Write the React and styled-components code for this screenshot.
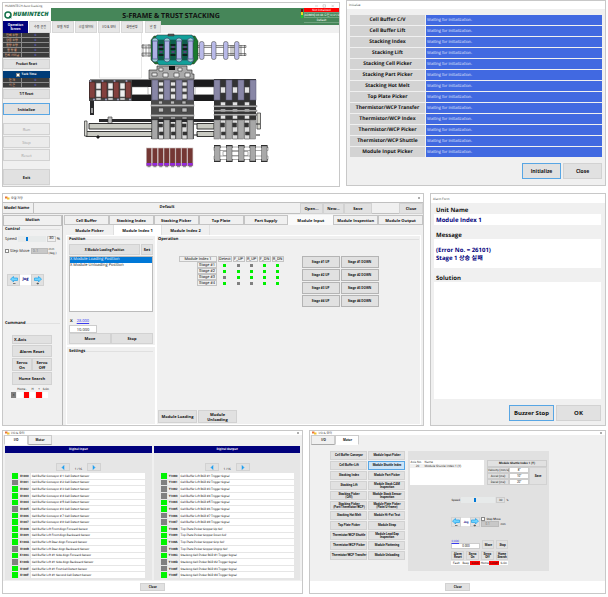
import React, { useState } from "react";
import styled, { createGlobalStyle } from 'styled-components'


const statRows = ["전체 수량", "양품 수량", "불량 수량", "불 량 률", "전체 사이클"];
const tackRows = ["현 재", "최 근"];
const mainTabs = ["수동 운전", "모델 저장", "스텝 데이터", "I/O & 모터", "화면설정"];

const initUnits = [
	"Cell Buffer C/V", "Cell Buffer Lift", "Stacking Index", "Stacking Lift", "Stacking Cell Picker",
	"Stacking Part Picker", "Stacking Hot Melt", "Top Plate Picker", "Thermistor/WCP Transfer",
	"Thermistor/WCP Index", "Thermistor/WCP Picker", "Thermistor/WCP Shuttle", "Module Input Picker",
];

const unitTabs = [
	"Cell Buffer", "Stacking Index", "Stacking Picker", "Top Plate", "Part Supply",
	"Module Input", "Module Inspection", "Module Output",
];

const sensors = ["Detect", "F_UP", "R_UP", "F_DN", "R_DN"];
const stages = [
	["Stage #1", [1, 0, 0, 1, 1]],
	["Stage #2", [1, 1, 1, 1, 1]],
	["Stage #3", [0, 1, 1, 1, 1]],
	["Stage #4", [1, 0, 0, 1, 1]],
];

const inputs = [
	["X1000", 1, "Cell Buffer Conveyor # 1 Cell Detect Sensor"],
	["X1001", 0, "Cell Buffer Conveyor # 2 Cell Detect Sensor"],
	["X1002", 1, "Cell Buffer Conveyor # 3 Cell Detect Sensor"],
	["X1003", 1, "Cell Buffer Conveyor # 4 Cell Detect Sensor"],
	["X1004", 1, "Cell Buffer Conveyor # 5 Cell Detect Sensor"],
	["X1005", 0, "Cell Buffer Conveyor # 6 Cell Detect Sensor"],
	["X1006", 1, "Cell Buffer Conveyor # 7 Cell Detect Sensor"],
	["X1007", 1, "Cell Buffer Conveyor # 8 Cell Detect Sensor"],
	["X1008", 1, "Cell Buffer Lift Front Align Forward Sensor"],
	["X1009", 1, "Cell Buffer Lift Front Align Backward Sensor"],
	["X100A", 1, "Cell Buffer Lift Rear Align Forward Sensor"],
	["X100B", 0, "Cell Buffer Lift Rear Align Backward Sensor"],
	["X100C", 1, "Cell Buffer Lift #1 Side Align Forward Sensor"],
	["X100D", 0, "Cell Buffer Lift #1 Side Align Backward Sensor"],
	["X100E", 1, "Cell Buffer Lift #1 First Cell Detect Sensor"],
	["X100F", 1, "Cell Buffer Lift #1 Second Cell Detect Sensor"],
];

const outputs = [
	["Y1080", 1, "Cell Buffer Lift BCR #1 Trigger Signal"],
	["Y1081", 0, "Cell Buffer Lift BCR #2 Trigger Signal"],
	["Y1082", 0, "Cell Buffer Lift BCR #3 Trigger Signal"],
	["Y1083", 0, "Cell Buffer Lift BCR #4 Trigger Signal"],
	["Y1084", 1, "Cell Buffer Lift BCR #5 Trigger Signal"],
	["Y1085", 1, "Cell Buffer Lift BCR #6 Trigger Signal"],
	["Y1086", 0, "Cell Buffer Lift BCR #7 Trigger Signal"],
	["Y1087", 0, "Cell Buffer Lift BCR #8 Trigger Signal"],
	["Y1088", 1, "Top Plate Picker Gripper Up Sol'"],
	["Y1089", 1, "Top Plate Picker Gripper Down Sol'"],
	["Y108A", 1, "Top Plate Picker Gripper Grip Sol'"],
	["Y108B", 0, "Top Plate Picker Gripper Ungrip Sol'"],
	["Y108C", 1, "Stacking Cell Picker BCR #1 Trigger Signal"],
	["Y108D", 0, "Stacking Cell Picker BCR #2 Trigger Signal"],
	["Y108E", 0, "Stacking Cell Picker BCR #3 Trigger Signal"],
	["Y108F", 1, "Stacking Cell Picker BCR #4 Trigger Signal"],
];

const motorUnits = [
	"Cell Buffer Conveyor", "Module Input Picker",
	"Cell Buffer Lift", "Module Shuttle Index",
	"Stacking Index", "Module Part Picker",
	"Stacking Lift", "Module Stack CAM\nInspection",
	"Stacking Picker\n(Cell)", "Module Stack Sensor\nInspection",
	"Stacking Picker\n(Part/Thermistor/WCP)", "Module Plate Picker\n(Plate/U-frame)",
	"Stacking Hot Melt", "Module Hi-Pot Test",
	"Top Plate Picker", "Module Strap",
	"Thermistor/WCP Shuttle", "Module Lead Gap\nInspection",
	"Thermistor/WCP Picker", "Module Flattening",
	"Thermistor/WCP Transfer", "Module Unloading",
];


export default function App() {
	return (
		<Page>
			<Global />
			<Row left={338} right={260} tall={187}>
				<MainScreen />
				<InitializeForm />
			</Row>
			<Row left={422} right={176} tall={233}>
				<ModelForm />
				<AlarmForm />
			</Row>
			<Row left={302} right={297} tall={164}>
				<IoForm />
				<MotorForm />
			</Row>
		</Page>
	);
}


function MainScreen() {
	return (
		<Win lower>
			<Title_bar h={5} size={3}>
				<span>HUMINTECH Auto Stacking</span>
				<Win_marks />
			</Title_bar>
			<Main_header>
				<Logo_box>
					<svg width="8" height="8" viewBox="0 0 16 16">
						<circle cx="8" cy="8" r="6" fill="none" stroke="#12714a" strokeWidth="3" />
						<path d="M11 9 L16 15 L9 13 Z" fill="#12714a" />
					</svg>
					<Logo_text>HUMINTECH</Logo_text>
				</Logo_box>
				<Main_title>S-FRAME &amp; TRUST STACKING</Main_title>
				<Tower>
					<i /><i /><i />
				</Tower>
				<Status>
					<Status_line red>Not Initialized</Status_line>
					<Status_line>[ADMIN] 08:44 오전 0/21/20</Status_line>
					<Status_line>Default</Status_line>
				</Status>
			</Main_header>
			<Main_tabs>
				<Main_tab on>Operation<br />Screen</Main_tab>
				{mainTabs.map((t) => <Main_tab key={t}>{t}</Main_tab>)}
				<Main_tab slim>알 람</Main_tab>
			</Main_tabs>
			<Main_body>
				<Side>
					<Count_table>
						<tbody>
							{statRows.map((t) => <tr key={t}><th>{t}</th><td>0</td></tr>)}
						</tbody>
					</Count_table>
					<Btn h={10} size={3}>Product Reset</Btn>
					<Tack_head>
						<input type="checkbox" id="tack" defaultChecked />
						<label htmlFor="tack">Tack Time</label>
					</Tack_head>
					<Count_table>
						<tbody>
							{tackRows.map((t) => <tr key={t}><th>{t}</th><td>0</td></tr>)}
						</tbody>
					</Count_table>
					<Btn h={10} size={3}>T/T Reset</Btn>
					<Side_group>
						<Btn h={12} size={4} focus>Initialize</Btn>
					</Side_group>
					<Side_group wide>
						<Btn h={12} size={4} disabled>Run</Btn>
						<Btn h={12} size={4} disabled>Stop</Btn>
						<Btn h={12} size={4} disabled>Reset</Btn>
					</Side_group>
					<Side_group wide>
						<Btn h={16} size={4}>Exit</Btn>
					</Side_group>
				</Side>
				<Machine />
			</Main_body>
		</Win>
	);
}

function Win_marks() {
	return (
		<svg width="24" height="4" viewBox="0 0 24 4" fill="none" stroke="#aaa" strokeWidth=".5">
			<path d="M2 2h3M10 .8h2.5v2.4H10zM18.500 .8l2.400 2.400M20.900 .8l-2.400 2.400" />
		</svg>
	);
}

// top view of the stacking line
function Machine() {
	const cells = [152, 164, 176, 187.5];
	const exits = [214, 226, 238, 250];
	return (
		<Machine_svg viewBox="51 33 288 153" preserveAspectRatio="xMinYMin meet" role="img" aria-label="Machine layout">
			<path d="M99.500 33V78H141.500V33" fill="none" stroke="#ddd" strokeWidth=".7" />

			{/* cell turret */}
			<g stroke="#333" strokeWidth=".5">
				<path d="M142 45h9v3h-9zM142 53h9v3h-9zM143 44v13M146 46v9M149 44v13" fill="#ddd" />
				<path d="M154 36H195L198 41V59L194 64H155L151 60V40Z" fill="#1a7a2e" />
				<path d="M157 35h35l3 5H154zM156 60h38l-3 5h-32z" fill="#12a09a" />
				<path d="M168 34h6v2h-6z" fill="#555" />
				<path d="M198 45.500h48v2h-48zM198 53.500h48v2h-48z" fill="#ddd" />
				<path d="M231 45v11M233 45v11M241 45v11M244.500 45v11" />
			</g>
			{[158.5, 170.5, 182.5].map((x) => (
				<g key={x}>
					<rect x={x} y="40" width="5" height="20" fill="#0f5d4e" />
					<path d={`M${x} 45h5M${x} 49h5M${x} 55h5`} stroke="#111" strokeWidth="1.5" />
					<path d={`M${x + 1} 47h3M${x + 1} 52h3`} stroke="#a030a0" strokeWidth="1" />
				</g>
			))}
			{[152.5, 164.5, 176.5, 188].map((x) => (
				<g key={x} stroke="#30406a" strokeWidth=".6">
					<circle cx={x + 2.5} cy="41" r="3" fill="#9fd0d8" />
					<circle cx={x + 2.5} cy="59" r="3" fill="#9fd0d8" />
					<rect x={x} y="41" width="5" height="18" fill="#aeb0e4" />
				</g>
			))}
			{[199.5, 211.5, 223.5, 234.5].map((x) => (
				<rect key={x} x={x} y="41.500" width="4.500" height="18" rx="2" fill="#b8b9e8" stroke="#555" strokeWidth=".6" />
			))}

			{/* pickers under the turret */}
			<path d="M157 66h30v4h5v4h2v5h-45v-9h8z" fill="#aaa" stroke="#222" strokeWidth=".6" />
			<path d="M159 68h4v3h-4zM178 68h4v3h-4zM152 73h5v3h-5zM163 73h5v4h-5zM174 73h5v4h-5zM185 73h5v4h-5z" fill="#eee" stroke="#333" strokeWidth=".6" />
			<path d="M169 66h6v4h-6z" fill="#111" />

			{/* main conveyor */}
			<path d="M90 79.500H256V87H90zM90 94.500H256V101H90z" fill="#1b1b1d" />
			<path d="M132 87h16v7.500h-16zM195 87h19v7.500h-19z" fill="#fff" stroke="#777" strokeWidth=".5" />
			<path d="M89 80h43v21H89z" fill="#454545" />
			{[96, 108, 120].map((x) => (
				<path key={x} d={`M${x} 83h5v6h-5zM${x} 90h5v7h-5zM${x} 98h5v2h-5z`} fill="#eee" stroke="#555" strokeWidth=".6" />
			))}
			{[89.5, 101.5, 113.5, 125.5].map((x) => (
				<g key={x}>
					<rect x={x} y="82" width="5.500" height="16" fill="#83403e" stroke="#35201f" strokeWidth=".6" />
					<circle cx={x + 1} cy="81" r="1.100" fill="#99b" />
					<circle cx={x + 4.5} cy="99.500" r="1.100" fill="#99b" />
				</g>
			))}
			<path d="M90 101h4v14h-4z" fill="#29292b" />
			<path d="M91 108h2v5h-2z" fill="#999" />

			<path d="M151 80h43v59h-43z" fill="#4c4c4c" />
			<path d="M214 79h42v41h-42z" fill="#333" />
			{[158.5, 170.5, 182].map((x) => (
				<g key={x} stroke="#333" strokeWidth=".6">
					<path d={`M${x} 82h5v4h-5zM${x} 88h5v4h-5zM${x} 94h5v5h-5z`} fill="#e4e4e4" />
					<path d={`M${x} 101h4v3h-4zM${x} 108h5v4h-5zM${x} 117h5v2h-5z`} fill="#bbb" />
					<path d={`M${x} 120h5v19h-5z`} fill="#ddd" />
					<path d={`M${x} 124h4v3h-4zM${x + 1} 132h4v3h-4z`} fill="#333" />
				</g>
			))}
			{[220.5, 232.5, 244.500].map((x) => (
				<g key={x} stroke="#444" strokeWidth=".6">
					<path d={`M${x} 87h5v6h-5zM${x} 102h5v4h-5zM${x} 109h5v3h-5zM${x} 114h5v5h-5z`} fill="#e5e5e5" />
					<path d={`M${x} 120h5v19h-5z`} fill="#ddd" />
					<path d={`M${x} 123h4v4h-4zM${x + 1} 132h4v3h-4z`} fill="#333" />
				</g>
			))}
			<path d="M151 104.500h43v2h-43zM151 114.500h43v2h-43zM214 105.500h43v1.500h-43zM214 110h43v1.500h-43zM214 114h43v1.500h-43z" fill="#bbb" stroke="#555" strokeWidth=".4" />
			{cells.concat(exits).map((x) => (
				<rect key={x} x={x} y="80" width="6" height="20" fill="#8886a6" stroke="#55536f" strokeWidth=".5" />
			))}

			{/* linear axes */}
			<path d="M99 119h120v3H99z" fill="#29292b" />
			<path d="M108 117h4v7h-4z" fill="#bbb" stroke="#333" strokeWidth=".6" />
			<path d="M89 123.500h63v5.500H89zM86 131.500h66v5H86zM197 123.500h17v5.500h-17zM197 131.500h17v5h-17z" fill="#c9cac2" stroke="#222" strokeWidth=".9" />
			<path d="M84.500 121h2.500v15h-2.500zM257 113h3.500v16h-3.500z" fill="#d5d5cd" stroke="#444" strokeWidth=".8" />
			<path d="M97 136h2v2h-2zM194 124h3M194 135h4M256 124h4M256 135h4" stroke="#222" />
			{cells.concat(exits).map((x) => (
				<rect key={x} x={x} y="120" width="5.500" height="19" fill="#a7a7a7" stroke="#666" strokeWidth=".5" />
			))}

			{/* magazines */}
			{[0, 1, 2, 3, 4, 5, 6, 7].map((n) => (
				<g key={n}>
					<rect x={146.3 + n * 5.9} y="148" width="5.300" height="18" fill="#743734" stroke="#c8bcbb" strokeWidth=".6" />
					<rect x={146.6 + n * 5.9} y="163" width="4.700" height="2.500" fill="#9228e0" />
					<rect x={147.5 + n * 5.9} y="166.200" width="3" height="1" fill="#777" />
				</g>
			))}
			<path d="M214 147h54v3.500h-54zM214 156h54v3.500h-54zM223 151.500h25v4h-25z" fill="#fff" stroke="#888" strokeWidth=".7" />
			{[214.5, 226.5, 238.5, 250, 261.5].map((x) => (
				<g key={x}>
					<path d={`M${x - 0.5} 145h6.500v3h-6.500zM${x - 0.5} 159h6.500v3h-6.500z`} fill="#222" />
					<rect x={x} y="146" width="5.500" height="15" fill="#a9a9a9" stroke="#555" strokeWidth=".5" />
				</g>
			))}
		</Machine_svg>
	);
}


function InitializeForm() {
	return (
		<Win short>
			<Title_bar h={8} size={3}><span>Initialize</span></Title_bar>
			<Init_body>
				<Init_table>
					<tbody>
						{initUnits.map((u) => (
							<tr key={u}><th>{u}</th><td>Waiting for initialization.</td></tr>
						))}
					</tbody>
				</Init_table>
				<Foot_btns>
					<Btn h={16} w={39} size={5} focus>Initialize</Btn>
					<Btn h={16} w={39} size={5}>Close</Btn>
				</Foot_btns>
			</Init_body>
		</Win>
	);
}


function ModelForm() {
	const [step, setStep] = useState(false);
	return (
		<Win>
			<Title_bar h={8} size={3}>
				<span><App_mark />모델 저장</span>
				<Close_mark />
			</Title_bar>
			<Model_bar>
				<strong>Model Name</strong>
				<Model_name>Default</Model_name>
				<Btn h={11} w={23}>Open...</Btn>
				<Btn h={11} w={21}>New...</Btn>
				<Btn h={11} w={28}>Save</Btn>
				<Bar_gap />
				<Btn h={11} w={24}>Close</Btn>
			</Model_bar>
			<Model_body>
				<Motion_side>
					<Motion_head>Motion</Motion_head>
					<Group tall={94}>
						<Legend>Control</Legend>
						<Speed_line>
							<label htmlFor="speed">Speed</label>
							<Slider id="speed" type="range" defaultValue="30" />
							<Num_box>30</Num_box>
							<span>%</span>
						</Speed_line>
						<Step_line>
							<input type="checkbox" id="step" checked={step} onChange={() => setStep(!step)} />
							<label htmlFor="step">Step Move</label>
							<Drop aria-label="Step size" off w={17}><option>0.1</option></Drop>
							<small>mm<br />(deg.)</small>
						</Step_line>
						<Jog />
					</Group>
					<Group>
						<Legend>Command</Legend>
						<Command_box>
							<Drop aria-label="Axis" bold><option>X-Axis</option></Drop>
							<Btn h={12}>Alarm Reset</Btn>
							<Pair>
								<Btn h={13}>Servo<br />On</Btn>
								<Btn h={13}>Servo<br />Off</Btn>
							</Pair>
							<Btn h={13}>Home Search</Btn>
						</Command_box>
						<Axis_table>
							<thead>
								<tr><th /><th>Home</th><th>-</th><th>H</th><th>+</th><th>S-On</th></tr>
							</thead>
							<tbody>
								<tr><Led_cell c="#808080">X</Led_cell><Led_cell /><Led_cell c="#f00" /><Led_cell /><Led_cell c="#f00" /><Led_cell /></tr>
							</tbody>
						</Axis_table>
					</Group>
				</Motion_side>
				<Unit_area>
					<Unit_tabs>
						{unitTabs.map((t) => <Unit_tab key={t} on={t === "Module Input"}>{t}</Unit_tab>)}
					</Unit_tabs>
					<Sub_tabs>
						<Sub_tab>Module Picker</Sub_tab>
						<Sub_tab on>Module Index 1</Sub_tab>
						<Sub_tab>Module Index 2</Sub_tab>
					</Sub_tabs>
					<Unit_body>
						<Pos_col>
							<Pos_group>
								<Legend>Position</Legend>
								<Pos_pick>
									<Btn h={11} size={3}>X Module Loading Position</Btn>
									<Btn h={11} w={12}>Set</Btn>
								</Pos_pick>
								<Pos_list>
									<Pos_item on>X Module Loading Position</Pos_item>
									<Pos_item>X Module Unloading Position</Pos_item>
								</Pos_list>
								<Pos_now><label htmlFor="posx">X</label><a href="#x">28.000</a></Pos_now>
								<Field id="posx" w={28} size={4} defaultValue="10.000" />
								<Pair>
									<Btn h={11}>Move</Btn>
									<Btn h={11}>Stop</Btn>
								</Pair>
							</Pos_group>
							<Group plain>
								<Legend>Settings</Legend>
							</Group>
						</Pos_col>
						<Op_col>
							<Legend>Operation</Legend>
							<Op_body>
								<Stage_table>
									<thead>
										<tr>
											<th><span>Module Index 1</span></th>
											{sensors.map((s) => <th key={s}><span>{s}</span></th>)}
										</tr>
									</thead>
									<tbody>
										{stages.map(([name, leds]) => (
											<tr key={name}>
												<th><span>{name}</span></th>
												{leds.map((v, i) => <td key={i}><Dot on={v} /></td>)}
											</tr>
										))}
									</tbody>
								</Stage_table>
								<Stage_btns>
									{[1, 2, 3, 4].map((n) => (
										<React.Fragment key={n}>
											<Btn h={12} size={3} line>Stage #{n} UP</Btn>
											<Btn h={12} size={3} line>Stage #{n} DOWN</Btn>
										</React.Fragment>
									))}
								</Stage_btns>
							</Op_body>
							<Op_foot>
								<Btn h={13} w={39}>Module Loading</Btn>
								<Btn h={13} w={39}>Module<br />Unloading</Btn>
							</Op_foot>
						</Op_col>
					</Unit_body>
				</Unit_area>
			</Model_body>
		</Win>
	);
}

function App_mark() {
	return (
		<svg width="5" height="4" viewBox="0 0 10 8">
			<path d="M0 1h5v4H0z" fill="#e8743a" /><path d="M4 3h5v4H4z" fill="#f2c230" />
		</svg>
	);
}

function Close_mark() {
	return (
		<svg width="4" height="4" viewBox="0 0 4 4"><path d="M1 1l2 2M3 1l-2 2" stroke="#777" strokeWidth=".6" /></svg>
	);
}

function Jog({ small }) {
	return (
		<Jog_line small={small}>
			<Btn h={small ? 10 : 12} aria-label="Jog minus"><Arrow flip /></Btn>
			<Jog_text small={small}>Jog</Jog_text>
			<Btn h={small ? 10 : 12} aria-label="Jog plus"><Arrow /></Btn>
		</Jog_line>
	);
}

function Arrow({ flip }) {
	return (
		<svg width="8" height="9" viewBox="0 0 16 18">
			<path
				d={flip ? "M1 6L7 1V4H15V9H7V12Z" : "M15 6L9 1V4H1V9H9V12Z"}
				fill="#6fd4ff" stroke="#2aa4e8" strokeWidth="1.500"
			/>
			<path d={flip ? "M6 15h5" : "M5 15h5M7.500 13v4"} stroke="#333" strokeWidth="1.200" />
		</svg>
	);
}


function AlarmForm() {
	return (
		<Win>
			<Title_bar h={9} size={3}><span>Alarm Form</span></Title_bar>
			<Alarm_body>
				<Alarm_head>Unit Name</Alarm_head>
				<Alarm_text h={11}>Module Index 1</Alarm_text>
				<Alarm_head>Message</Alarm_head>
				<Alarm_text h={29}>(Error No. = 26101)<br />Stage 1 상승 실패</Alarm_text>
				<Alarm_head>Solution</Alarm_head>
				<Alarm_text grow />
				<Foot_btns tight>
					<Btn h={16} w={45} size={6} focus>Buzzer Stop</Btn>
					<Btn h={16} w={45} size={6}>OK</Btn>
				</Foot_btns>
			</Alarm_body>
		</Win>
	);
}


function IoForm() {
	return (
		<Win>
			<Title_bar h={4} size={3}><span><App_mark />I/O & 모터</span><Close_mark /></Title_bar>
			<Top_tabs><Top_tab on>I/O</Top_tab><Top_tab>Motor</Top_tab></Top_tabs>
			<Io_body>
				<IoList title="Digital Input" rows={inputs} />
				<IoList title="Digital Output" rows={outputs} />
			</Io_body>
			<Form_foot><Btn h={8} w={25} size={3}>Close</Btn></Form_foot>
		</Win>
	);
}

function IoList({ title, rows }) {
	return (
		<Io_panel>
			<Io_title>{title}</Io_title>
			<Pager>
				<Btn h={8} w={14} aria-label="Previous page">
					<svg width="4" height="5" viewBox="0 0 8 10"><path d="M6 1L2 5L6 9Z" fill="#189df0" stroke="#189df0" /></svg>
				</Btn>
				<span>1 /16</span>
				<Btn h={8} w={14} aria-label="Next page">
					<svg width="4" height="5" viewBox="0 0 8 10"><path d="M2 1L6 5L2 9Z" fill="#189df0" stroke="#189df0" /></svg>
				</Btn>
			</Pager>
			<Io_table>
				<tbody>
					{rows.map(([id, v, text]) => (
						<tr key={id}><Io_led on={v} /><th>{id}</th><td>{text}</td></tr>
					))}
				</tbody>
			</Io_table>
		</Io_panel>
	);
}


function MotorForm() {
	return (
		<Win>
			<Title_bar h={4} size={3}><span><App_mark />I/O & 모터</span><Close_mark /></Title_bar>
			<Top_tabs><Top_tab>I/O</Top_tab><Top_tab on>Motor</Top_tab></Top_tabs>
			<Motor_body>
				<Motor_grid>
					{motorUnits.map((u) => <Motor_btn key={u} on={u === "Module Shuttle Index"}>{u}</Motor_btn>)}
				</Motor_grid>
				<Motor_panel>
					<Motor_top>
						<Axis_list>
							<thead><tr><th>Axis No.</th><th>Name</th></tr></thead>
							<tbody><tr><td>20</td><td>Module Shuttle Index 1 (Y)</td></tr></tbody>
						</Axis_list>
						<Param_box>
							<Param_head>Module Shuttle Index 1 (Y)</Param_head>
							<Param_main>
								<Param_rows>
									<label htmlFor="vel">Velocity (mm/s)</label><Field id="vel" size={3} defaultValue={'8"'} />
									<label htmlFor="acc">Accel (ms)</label><Field id="acc" size={3} defaultValue={'10"'} />
									<label htmlFor="dec">Decel (ms)</label><Field id="dec" size={3} defaultValue={'20"'} />
								</Param_rows>
								<Btn size={3}>Save</Btn>
							</Param_main>
						</Param_box>
					</Motor_top>
					<Motor_ctl>
						<Speed_line small>
							<label htmlFor="mspeed">Speed</label>
							<Slider id="mspeed" type="range" defaultValue="40" />
							<Num_box>30</Num_box>
							<span>%</span>
						</Speed_line>
						<Jog_row>
							<Jog small />
							<Step_box>
								<div><input type="checkbox" id="mstep" /><label htmlFor="mstep">Step Move</label></div>
								<div><Drop aria-label="Motor step size" off w={18} size={3}><option>0.1</option></Drop><span>mm</span></div>
							</Step_box>
						</Jog_row>
						<Target_row>
							<Target>
								<a href="#pos">0.000</a>
								<Field aria-label="Target position" size={3} defaultValue="0.000" />
							</Target>
							<Btn h={9} w={12} size={3}>Move</Btn>
							<Btn h={9} w={12} size={3}>Stop</Btn>
						</Target_row>
						<Quad>
							<Btn h={9} size={3}>Alarm<br />Reset</Btn>
							<Btn h={9} size={3}>Servo<br />On</Btn>
							<Btn h={9} size={3}>Servo<br />Off</Btn>
							<Btn h={9} size={3}>Home<br />Search</Btn>
						</Quad>
						<Flags>
							<Flag>Fault</Flag><Flag>Busy</Flag><Flag red>Limit-</Flag>
							<Flag>Home</Flag><Flag red>Limit+</Flag><Flag>S-On</Flag>
						</Flags>
					</Motor_ctl>
				</Motor_panel>
			</Motor_body>
			<Form_foot><Btn h={8} w={25} size={3}>Close</Btn></Form_foot>
		</Win>
	);
}


const narrow = '"Liberation Sans Narrow", Roboto, sans-serif';

const Global = createGlobalStyle`
	* { box-sizing: border-box; }
	body {
		margin: 0;
		background: #fff;
		color: #111;
		font-family: "Open Sans", "Noto Sans CJK KR", sans-serif;
		font-size: 4px;
		line-height: 5px;
		text-rendering: geometricPrecision;
	}
	button, input, select {
		margin: 0;
		padding: 0;
		font: inherit;
		color: inherit;
		border-radius: 0;
	}
	table { border-spacing: 0; }
	th, td { padding: 0; }
	svg { display: block; flex: none; }
	a { color: #3a3af0; }
	input[type="checkbox"] {
		appearance: none;
		flex: none;
		width: 4px;
		height: 4px;
		border: 1px solid #888;
		background: #fff;
	}
`

const Page = styled.main`
	padding: 0 2px;
`

const Row = styled.section`
	display: grid;
	grid-template-columns: minmax(0, ${({ left }) => left}fr) minmax(0, ${({ right }) => right}fr);
	column-gap: 6px;
	min-height: ${({ tall }) => tall}px;
	margin-bottom: 4px;

	&:first-child {
		margin-bottom: 6px;
	}
	&:last-child {
		margin-bottom: 0;
	}
`

const Win = styled.div`
	display: flex;
	flex-direction: column;
	min-width: 0;
	margin-top: ${({ lower }) => lower ? 2 : 0}px;
	margin-bottom: ${({ short }) => short ? 1 : 0}px;
	border: 1px solid #c8c8c8;
	background: #f0f0f0;
`

const Title_bar = styled.div`
	display: flex;
	justify-content: space-between;
	align-items: center;
	height: ${({ h }) => h}px;
	padding: 0 2px;
	background: #fff;
	color: #333;
	font-size: ${({ size }) => size}px;
	line-height: 4px;

	span { display: flex; align-items: center; gap: 1px; }
`

const Btn = styled.button`
	display: flex;
	align-items: center;
	justify-content: center;
	flex: ${({ w }) => w ? 'none' : '1 1 0'};
	min-width: 0;
	width: ${({ w }) => w ? w + 'px' : 'auto'};
	height: ${({ h }) => h ? h + 'px' : 'auto'};
	border: 1px solid ${({ focus, line }) => focus ? '#58a6e4' : line ? '#b4b4b4' : '#d2d2d2'};
	background: #e1e1e1;
	font-size: ${({ size }) => size || 4}px;
	line-height: ${({ size }) => (size || 4) + 1}px;
	font-weight: bold;
	white-space: nowrap;
	text-align: center;

	&:hover { background: #e5f1fb; }
	&:disabled { color: #a0a0a0; background: #ebebeb; font-weight: normal; }
`

/* main screen */

const Main_header = styled.header`
	display: flex;
	align-items: flex-start;
	height: 17px;
	background: #468659;
`

const Logo_box = styled.div`
	display: flex;
	align-items: center;
	gap: 1px;
	width: 48px;
	height: 13px;
	padding-left: 1px;
	background: #fff;
`

const Logo_text = styled.span`
	font-size: 6px;
	font-weight: 800;
	font-style: italic;
	color: #14704a;
`

const Main_title = styled.h1`
	flex: 1;
	margin: 0;
	padding-right: 10px;
	font-size: 7px;
	line-height: 17px;
	text-align: center;
	color: #111;
`

const Tower = styled.div`
	display: flex;
	flex-direction: column;
	width: 2px;
	margin: 1px 1px 0 0;

	i { height: 3px; background: #5c1a1a; }
	i:nth-child(2) { background: #e8d820; }
	i:nth-child(3) { background: #22c32c; }
`

const Status = styled.div`
	width: 35px;
`

const Status_line = styled.div`
	height: 5px;
	border-bottom: 1px solid #6fa27e;
	background: ${({ red }) => red ? '#f00' : 'none'};
	color: #fff;
	font-family: "Liberation Sans Narrow", Roboto, "Noto Sans CJK KR", sans-serif;
	font-size: 3px;
	line-height: 4px;
	text-align: center;
	white-space: nowrap;
`

const Main_tabs = styled.nav`
	display: flex;
	gap: 1px;
	width: fit-content;
	margin-top: -4px;
	background: #fff;
`

const Main_tab = styled.button`
	width: ${({ on, slim }) => on ? 25 : slim ? 16 : 22}px;
	height: 12px;
	margin-left: ${({ slim }) => slim ? 1 : 0}px;
	border: 1px solid ${({ on }) => on ? '#00007c' : '#d8d8d8'};
	background: ${({ on }) => on ? '#00007c' : '#e6e6e6'};
	color: ${({ on }) => on ? '#fff' : '#222'};
	font-size: 3px;
	line-height: 4px;
	font-weight: ${({ on }) => on ? 'bold' : 'normal'};
	white-space: nowrap;
`

const Main_body = styled.div`
	display: flex;
	flex: 1;
	background: #fff;
`

const Side = styled.aside`
	display: flex;
	flex-direction: column;
	flex: none;
	width: 47px;
	background: #f0f0f0;

	> button { flex: none; margin-top: 1px; }
`

const Count_table = styled.table`
	width: 100%;
	table-layout: fixed;
	font-size: 3px;
	line-height: 4px;

	th, td {
		height: 5px;
		border: solid #8a8a8a;
		border-width: 0 1px 1px 0;
		background: #3c3c3c;
		font-weight: normal;
		text-align: center;
	}
	th { width: 40%; color: #f2b48a; }
	td { color: #7a78ff; }
`

const Tack_head = styled.div`
	display: flex;
	align-items: center;
	justify-content: center;
	gap: 1px;
	height: 7px;
	margin-top: 2px;
	background: #003c78;
	color: #fff;
	font-size: 3px;
	font-weight: bold;
`

const Side_group = styled.div`
	display: flex;
	flex-direction: column;
	gap: 1px;
	margin-top: ${({ wide }) => wide ? 8 : 4}px;

	button { flex: none; }
`

const Machine_svg = styled.svg`
	flex: 1 1 0;
	min-width: 0;
	height: auto;
	align-self: flex-start;
	margin-left: 1px;
`

/* initialize form */

const Init_body = styled.div`
	flex: 1;
	padding: 5px 3px 0;
`

const Init_table = styled.table`
	width: 100%;
	border-spacing: 0 1px;

	th {
		width: 75px;
		height: 10px;
		background: #d3d3d3;
		font-size: 5px;
		line-height: 6px;
		white-space: nowrap;
	}
	td {
		padding-left: 1px;
		border-left: 1px solid #f0f0f0;
		background: #4169e1;
		color: #e4e9fb;
	}
`

const Foot_btns = styled.div`
	display: flex;
	justify-content: flex-end;
	gap: 2px;
	margin-top: ${({ tight }) => tight ? 6 : 5}px;
`

/* model form */

const Model_bar = styled.div`
	display: flex;
	align-items: center;
	height: 12px;
	border-top: 1px solid #c0c0c0;
	border-bottom: 1px solid #c0c0c0;

	strong { width: 30px; padding-left: 1px; white-space: nowrap; }
`

const Model_name = styled.div`
	flex: 1;
	border-left: 1px solid #c0c0c0;
	font-weight: bold;
	line-height: 10px;
	text-align: center;
`

const Bar_gap = styled.div`
	width: 27px;
`

const Model_body = styled.div`
	display: flex;
	flex: 1;
	padding-top: 1px;
`

const Motion_side = styled.aside`
	display: flex;
	flex-direction: column;
	width: 60px;
	border-right: 1px solid #b8b8b8;
`

const Motion_head = styled.div`
	height: 11px;
	border: 1px solid #c0c0c0;
	line-height: 10px;
	font-weight: bold;
	text-align: center;
`

const Group = styled.section`
	min-height: ${({ tall }) => tall || 0}px;
	padding: ${({ plain }) => plain ? '2px' : '1px 2px'};
`

const Legend = styled.h2`
	display: flex;
	align-items: center;
	gap: 1px;
	margin: 0;
	font-size: 4px;
	line-height: 5px;

	&::after {
		content: "";
		flex: 1;
		height: 1px;
		background: #e0e0e0;
	}
`

const Speed_line = styled.div`
	display: flex;
	align-items: center;
	gap: 1px;
	margin-top: ${({ small }) => small ? 0 : 4}px;
	font-size: ${({ small }) => small ? 3 : 4}px;

	label { width: ${({ small }) => small ? 9 : 12}px; }
`

const Slider = styled.input`
	appearance: none;
	flex: 1;
	min-width: 0;
	height: 6px;
	background: #e7eaea;

	&::-webkit-slider-thumb {
		appearance: none;
		width: 2px;
		height: 4px;
		background: #0078d7;
	}
`

const Num_box = styled.span`
	width: 9px;
	border: 1px solid #ccc;
	text-align: center;
	line-height: 4px;
`

const Step_line = styled.div`
	display: flex;
	align-items: center;
	gap: 1px;
	height: 8px;
	margin-top: 5px;
	white-space: nowrap;

	small { font-size: 3px; line-height: 4px; }
`

const Drop = styled.select`
	appearance: none;
	flex: none;
	width: ${({ w }) => w ? w + 'px' : '100%'};
	height: ${({ off }) => off ? 6 : 9}px;
	padding: 0 1px;
	border: 1px solid ${({ off }) => off ? '#bbb' : '#d2d2d2'};
	background: ${({ off }) => off ? '#c8c8c8' : '#e1e1e1'};
	color: ${({ off }) => off ? '#777' : '#222'};
	font-size: ${({ size }) => size || 4}px;
	font-weight: ${({ bold }) => bold ? 'bold' : 'normal'};
	line-height: ${({ off }) => off ? 4 : 7}px;
`

const Jog_line = styled.div`
	display: flex;
	align-items: center;
	width: ${({ small }) => small ? 29 : 37}px;
	margin: ${({ small }) => small ? '0' : '19px 0 0 2px'};
`

const Jog_text = styled.span`
	flex: none;
	width: ${({ small }) => small ? 9 : 11}px;
	background: #fff;
	color: #00007c;
	font-size: ${({ small }) => small ? 3 : 4}px;
	line-height: ${({ small }) => small ? 8 : 10}px;
	font-weight: bold;
	text-align: center;
`

const Command_box = styled.div`
	display: flex;
	flex-direction: column;
	gap: 1px;
	margin: 9px 8px 0 7px;

	> button { flex: none; }
`

const Pair = styled.div`
	display: flex;
`

const Axis_table = styled.table`
	width: 39px;
	margin: 2px 0 0 5px;
	table-layout: fixed;
	border-spacing: 1px 0;
	font-size: 3px;
	line-height: 5px;

	th { font-weight: normal; font-family: ${narrow}; white-space: nowrap; }
`

const Led_cell = styled.td`
	height: 6px;
	background: ${({ c }) => c || '#fff'};
	text-align: center;
`

const Unit_area = styled.div`
	display: flex;
	flex-direction: column;
	flex: 1;
	min-width: 0;
	padding-left: 1px;
`

const Unit_tabs = styled.nav`
	display: flex;
`

const Unit_tab = styled.button`
	flex: 1 1 0;
	min-width: 0;
	height: 10px;
	border: 1px solid ${({ on }) => on ? '#fafafa' : '#c4c4c4'};
	background: ${({ on }) => on ? '#fafafa' : '#f0f0f0'};
	font-weight: bold;
	white-space: nowrap;
`

const Sub_tabs = styled.nav`
	display: flex;
	padding-left: 2px;
`

const Sub_tab = styled.button`
	width: 48px;
	height: 10px;
	border: 0;
	border-right: 1px solid #e0e0e0;
	background: ${({ on }) => on ? '#fff' : '#f0f0f0'};
	font-weight: bold;
`

const Unit_body = styled.div`
	display: flex;
	flex: 1;
	margin: 0 2px;
	border: 1px solid #fff;
`

const Pos_col = styled.div`
	width: 90px;
	border-right: 2px solid #fff;
`

const Pos_group = styled.section`
	height: 111px;
	padding: 1px 2px;
	border-bottom: 2px solid #fff;
`

const Pos_pick = styled.div`
	display: flex;
	gap: 1px;
	margin-top: 2px;
`

const Pos_list = styled.ul`
	height: 56px;
	margin: 1px 0 5px;
	padding: 0;
	border: 1px solid #bbb;
	background: #fff;
	list-style: none;
`

const Pos_item = styled.li`
	background: ${({ on }) => on ? '#0078d7' : 'none'};
	color: ${({ on }) => on ? '#fff' : '#111'};
	line-height: 6px;
	white-space: nowrap;
`

const Pos_now = styled.div`
	display: flex;
	gap: 4px;
	padding: 2px 1px 1px;

	label { font-weight: bold; }
`

const Field = styled.input`
	display: block;
	width: ${({ w }) => w ? w + 'px' : '100%'};
	min-width: 0;
	height: ${({ size }) => size === 3 ? 6 : 8}px;
	border: 1px solid #ccc;
	background: #fff;
	font-size: ${({ size }) => size}px;
	line-height: 4px;
	text-align: center;
`

const Op_col = styled.section`
	display: flex;
	flex-direction: column;
	flex: 1;
	min-width: 0;
	padding: 1px;
`

const Op_body = styled.div`
	display: flex;
	align-items: flex-start;
	flex: 1;
	gap: 17px;
	padding: 14px 0 0 20px;
`

const Stage_table = styled.table`
	line-height: 4px;
	border-spacing: 1px 0;

	th, td { height: 6px; font-weight: normal; text-align: center; }
	th:first-child { width: 38px; }
	th:not(:first-child) { width: 12px; }
	th { font-family: ${narrow}; }
	th span { display: block; border: 1px solid #c4c4c4; white-space: nowrap; }
	tbody th span { margin-left: 18px; }
`

const Dot = styled.i`
	display: block;
	width: 3px;
	height: 3px;
	margin: 0 auto;
	background: ${({ on }) => on ? '#00f000' : '#808080'};
`

const Stage_btns = styled.div`
	display: grid;
	grid-template-columns: 38px 38px;
	gap: 1px;
`

const Op_foot = styled.div`
	display: flex;
	gap: 1px;
`

/* alarm form */

const Alarm_body = styled.div`
	display: flex;
	flex-direction: column;
	flex: 1;
	padding: 3px 4px 4px 3px;
`

const Alarm_head = styled.h2`
	margin: 0;
	padding-left: 2px;
	font-size: 6px;
	line-height: 8px;

	&:not(:first-child) { margin-top: 6px; }
`

const Alarm_text = styled.div`
	display: flex;
	flex-direction: column;
	justify-content: center;
	flex: ${({ grow }) => grow ? 1 : 'none'};
	min-height: ${({ h }) => h || 0}px;
	padding-left: 2px;
	background: #fff;
	color: #00007c;
	font-size: 6px;
	line-height: 8px;
	font-weight: bold;
`

/* io and motor forms */

const Top_tabs = styled.nav`
	display: flex;
	padding-left: 1px;
	background: #f0f0f0;
`

const Top_tab = styled.button`
	width: 24px;
	height: 10px;
	border: 1px solid #ccc;
	border-bottom-color: ${({ on }) => on ? '#fff' : '#aaa'};
	background: ${({ on }) => on ? '#fff' : '#f0f0f0'};
	font-size: 3px;
	font-weight: bold;
`

const Form_foot = styled.div`
	display: flex;
	justify-content: center;
	padding: 2px;
	background: #fff;
`

const Io_body = styled.div`
	display: grid;
	grid-template-columns: 1fr 1fr;
	gap: 2px;
	flex: 1;
	padding: 1px 2px;
`

const Io_panel = styled.section`
	display: flex;
	flex-direction: column;
	min-width: 0;
	background: #e6e6e6;
`

const Io_title = styled.h2`
	margin: 0;
	background: #00007c;
	color: #fff;
	font-size: 3px;
	line-height: 7px;
	text-align: center;
`

const Pager = styled.div`
	display: flex;
	justify-content: center;
	align-items: flex-end;
	gap: 5px;
	padding-top: 10px;
	font-size: 3px;
	line-height: 4px;
`

const Io_table = styled.table`
	flex: none;
	align-self: center;
	width: 92%;
	height: 107px;
	margin-top: 1px;
	border-spacing: 1px;
	font-size: 3px;
	line-height: 4px;

	th { width: 11px; background: #f0f0f0; font-family: ${narrow}; }
	td:last-child {
		padding-left: 1px;
		background: #fff;
		font-family: ${narrow};
		white-space: nowrap;
	}
`

const Io_led = styled.td`
	width: 6px;
	background: ${({ on }) => on ? '#00f400' : '#808080'};
`

const Motor_body = styled.div`
	display: flex;
	align-items: flex-start;
	flex: 1;
	gap: 3px;
	padding: 6px 19% 0 20px;
`

const Motor_grid = styled.div`
	display: grid;
	grid-template-columns: 37px 37px;
	grid-auto-rows: 9px;
	gap: 1px;
`

const Motor_btn = styled.button`
	border: 1px solid ${({ on }) => on ? '#58a6e4' : '#d2d2d2'};
	background: ${({ on }) => on ? '#cce4f7' : '#e1e1e1'};
	font-family: ${narrow};
	font-size: 3px;
	line-height: 3px;
	font-weight: bold;
	white-space: pre;
`

const Motor_panel = styled.section`
	flex: 1;
	min-width: 0;
	height: 120px;
	padding: 9px 2px 0;
	background: #e1e1e1;
`

const Motor_top = styled.div`
	display: flex;
	gap: 3px;
	height: 25px;
`

const Axis_list = styled.table`
	flex: 1;
	align-self: stretch;
	display: block;
	background: #fff;
	font-size: 3px;
	line-height: 4px;

	th { font-weight: normal; text-align: left; }
	th:first-child { width: 14px; }
	td:first-child { text-align: center; }
	tbody { background: #f0f0f0; }
`

const Param_box = styled.div`
	display: flex;
	flex-direction: column;
	width: 60px;
	font-size: 3px;
	font-family: ${narrow};
`

const Param_head = styled.div`
	height: 7px;
	border: 1px solid #ccc;
	font-weight: bold;
	text-align: center;
`

const Param_main = styled.div`
	display: flex;
	flex: 1;
`

const Param_rows = styled.div`
	display: grid;
	grid-template-columns: 22px 20px;

	label {
		border: 1px solid #ccc;
		line-height: 4px;
		text-align: center;
		white-space: nowrap;
	}
`

const Motor_ctl = styled.div`
	width: 57px;
	margin: 12px 0 0 41px;
	font-family: ${narrow};
	font-size: 3px;
	line-height: 4px;
`

const Jog_row = styled.div`
	display: flex;
	align-items: flex-end;
	gap: 1px;
	margin: 14px 0 12px;
`

const Step_box = styled.div`
	white-space: nowrap;

	div { display: flex; align-items: center; gap: 1px; }
`

const Target_row = styled.div`
	display: flex;
	align-items: flex-end;
	gap: 2px;
`

const Target = styled.div`
	width: 29px;
`

const Quad = styled.div`
	display: grid;
	grid-template-columns: repeat(4, 1fr);
	gap: 2px;
	margin-top: 2px;

	button { line-height: 3px; }
`

const Flags = styled.div`
	display: grid;
	grid-template-columns: repeat(6, 1fr);
	margin-top: 1px;
`

const Flag = styled.span`
	overflow: hidden;
	background: ${({ red }) => red ? '#f00' : '#fff'};
	text-align: center;
`
